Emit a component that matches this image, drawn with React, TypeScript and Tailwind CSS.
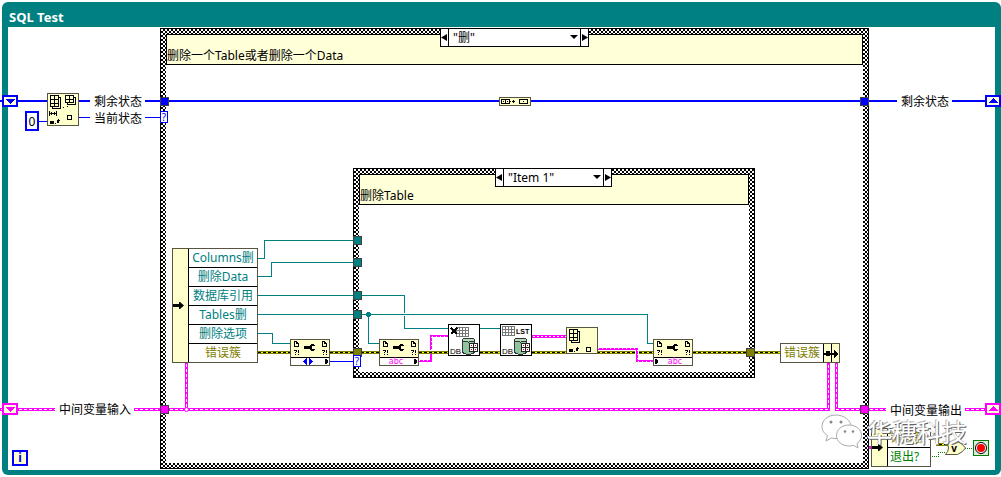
import React, { useState } from 'react';

interface CaseProps {
  className: string;
  note: string;
  options: string[];
  selectorClass: string;
  label: string;
}

// Checkered case structure with its selector on the top edge
function CaseStructure({ className, note, options, selectorClass, label }: CaseProps) {
  const [index, setIndex] = useState(0);
  const step = (delta: number) => setIndex((index + delta + options.length) % options.length);

  return (
    <section className={`absolute border border-black ${className}`}>
      <svg className="absolute h-full w-full" shapeRendering="crispEdges" aria-hidden="true">
        <defs>
          <pattern id={`hatch-${label}`} width="4" height="4" patternUnits="userSpaceOnUse">
            <rect width="4" height="4" fill="#000" />
            <path d="M0 0h2v2H0zM2 2h2v2H2z" fill="#fff" />
          </pattern>
        </defs>
        <rect width="100%" height="100%" fill={`url(#hatch-${label})`} />
      </svg>
      <div className="relative h-full p-[5px]">
        <div className="h-full bg-white">
          <p className="flex h-[31px] items-end border border-black bg-[#ffffd8] leading-4">{note}</p>
        </div>
      </div>
      <div className={`absolute -top-px flex h-[19px] border border-black bg-white ${selectorClass}`}>
        <button aria-label="Previous case" className="w-2 shrink-0 border-r border-black" onClick={() => step(-1)}>
          <svg viewBox="0 0 7 17" className="h-[17px] w-[7px]"><path d="M6 5v7L0 8.5z" /></svg>
        </button>
        <div className="relative flex-1">
          <select
            aria-label={label}
            value={index}
            onChange={(e) => setIndex(Number(e.target.value))}
            className="block h-[17px] w-full appearance-none bg-white pl-1 leading-4 outline-none"
          >
            {options.map((option, i) => (
              <option key={option} value={i}>{option}</option>
            ))}
          </select>
          <svg viewBox="0 0 8 4" className="pointer-events-none absolute top-1.5 right-0.5 h-1 w-2"><path d="M0 0h8L4 4z" /></svg>
        </div>
        <button aria-label="Next case" className="w-2 shrink-0 border-l border-black" onClick={() => step(1)}>
          <svg viewBox="0 0 7 17" className="h-[17px] w-[7px]"><path d="M1 5v7l6-3.5z" /></svg>
        </button>
      </div>
    </section>
  );
}

const TEAL_WIRES = [
  'M258 258.5H264.5V240.5H354',
  'M258 276.5H271.5V262.5H354',
  'M258 295.5H354M361 295.5H404.5V313M404.5 316V328.5H448M480 328.5H500',
  'M258 314.5H354M361 314.5H647.5V343.5H653',
  'M368.5 314V343.5H379',
  'M258 333.5H272.5V343.5H290',
];

const ERROR_WIRES =
  'M258 352.5H290M330 352.5H353M361 352.5H379M419 352.5H448M480 352.5H500M532 352.5H635M639 352.5H653M693 352.5H747M755 352.5H780M931 437.5H937.5V444.5H948';

const CLUSTER_WIRES =
  'M0 409.5H2M18 409.5H55M134 409.5H160M169 409.5H828.5V363M836.5 363V409.5H860M869 409.5H886M965 409.5H985M186.5 363V409';

const TUNNELS = [
  { x: 160, y: 97, fill: '#00f' },
  { x: 860, y: 97, fill: '#00f' },
  { x: 160, y: 405, fill: '#f0f' },
  { x: 860, y: 405, fill: '#f0f' },
  { x: 353, y: 236, fill: '#008080' },
  { x: 353, y: 258, fill: '#008080' },
  { x: 353, y: 291, fill: '#008080' },
  { x: 353, y: 310, fill: '#008080' },
  { x: 353, y: 348, fill: '#808000' },
  { x: 746, y: 348, fill: '#808000' },
];

const SHIFT_REGISTERS = [
  { x: 2, y: 95, color: '#00f', arrow: 'M3 4h10L8 9z' },
  { x: 985, y: 95, color: '#00f', arrow: 'M3 8h10L8 3z' },
  { x: 2, y: 403, color: '#f0f', arrow: 'M3 4h10L8 9z' },
  { x: 985, y: 403, color: '#f0f', arrow: 'M3 8h10L8 3z' },
];

const CASE_TERMINALS = [
  { x: 160, y: 111 },
  { x: 353, y: 355 },
];

// Wires plus the terminals they end on
function Wiring() {
  return (
    <svg width="1001" height="477" viewBox="0 0 1001 477" fill="none" shapeRendering="crispEdges" className="pointer-events-none absolute top-0 left-0" aria-hidden="true">
      <path stroke="#00f" strokeWidth="2" d="M0 101H2M18 101H47M79 101H90M145 101H160M169 101H499M531 101H860M869 101H897M952 101H985" />
      <path stroke="#00f" d="M79 117.5H90M145 117.5H160M39 121.5H47M330 361.5H353" />
      {TEAL_WIRES.map((d) => (
        <path key={d} d={d} stroke="#008080" />
      ))}
      <circle cx="368.5" cy="314.5" r="2.5" fill="#008080" />

      <path d={ERROR_WIRES} stroke="#808000" strokeWidth="3" />
      <path d={ERROR_WIRES} stroke="#ff0" />
      <path d={ERROR_WIRES} stroke="#000" strokeDasharray="3 2" />

      <path d={CLUSTER_WIRES} stroke="#f0f" strokeWidth="3" />
      <path d={CLUSTER_WIRES} stroke="#fff" strokeDasharray="3 2" strokeDashoffset="-1" />
      <circle cx="186.5" cy="409.5" r="2" fill="#fff" stroke="#f0f" shapeRendering="auto" />

      <path stroke="#f0f" strokeWidth="2" d="M419 361H431V354M431 350V336H448M598 349H637V361H653" />
      <path stroke="#fff" strokeDasharray="1 3" d="M419 360.5H431M431.5 337V350M432 336.5H448M598 348.5H637M637.5 350V361M638 361.5H653" />
      <path stroke="#f0f" strokeWidth="3" d="M532 336.5H566" />
      <path stroke="#fff" strokeDasharray="2 2" d="M533 336.5H566" />
      <path stroke="#f0f" strokeWidth="3" d="M869 447.5H871" />
      <path stroke="#008000" strokeDasharray="1 1" d="M932 456.5H938.5V452.5H946M965 448.5H973" />

      {TUNNELS.map(({ x, y, fill }) => (
        <rect key={`${x}-${y}`} x={x + 0.5} y={y + 0.5} width="8" height="8" fill={fill} stroke="#404040" />
      ))}
      {SHIFT_REGISTERS.map(({ x, y, color, arrow }) => (
        <g key={`${x}-${y}`} transform={`translate(${x} ${y})`}>
          <rect x="1" y="1" width="14" height="10" fill="#ffffd8" stroke={color} strokeWidth="2" />
          <path d={arrow} fill={color} />
        </g>
      ))}
      {CASE_TERMINALS.map(({ x, y }) => (
        <g key={`${x}-${y}`} transform={`translate(${x} ${y})`}>
          <rect x=".5" y=".5" width="7" height="11" fill="#fff" stroke="#00f" />
          <text x="4" y="10" textAnchor="middle" fontSize="10" fill="#00f">?</text>
        </g>
      ))}
    </svg>
  );
}

// 3x4 grid with a second page peeking out behind it
function ArrayGlyph() {
  return (
    <g fill="none" stroke="#000">
      <path d="M3.5 2.5h8v11h-8zM7.5 2.5v11M3.5 6.5h8M3.5 10.5h8" />
      <path d="M11.5 4.5h2v11h-8v-2" />
    </g>
  );
}

function ArraySubset() {
  return (
    <svg viewBox="0 0 32 33" className="absolute top-[93px] left-[47px] h-[33px] w-8" shapeRendering="crispEdges">
      <rect x=".5" y=".5" width="31" height="32" fill="#ffffcc" stroke="#555541" />
      <ArrayGlyph />
      <path d="M18.5 2.5h8v7h-8zM22.5 2.5v7M18.5 6.5h8M26.5 4.5h2v7h-8v-2" fill="none" stroke="#000" />
      <path d="M16 14h1v1h-1zM20 13h1v1h-1zM2 18h1v5H2zM9 18h1v5H9zM3 20h6v1H3zM4 19h1v3H4zM7 19h1v3H7z" />
      <path d="M3 28h4v3H3zM8 30h1v1H8zM10 28h1v2h-1zM11 26h1v4h-1zM10 27h3v1h-3z" />
      <path d="M20.5 22.5h4v4h-4z" fill="none" stroke="#000" />
    </svg>
  );
}

function IndexArray() {
  return (
    <svg viewBox="0 0 32 27" className="absolute top-[327px] left-[566px] h-[27px] w-8" shapeRendering="crispEdges">
      <rect x=".5" y=".5" width="31" height="26" fill="#ffffcc" stroke="#555541" />
      <ArrayGlyph />
      <path d="M3 22h4v3H3zM8 24h1v1H8zM10 22h1v2h-1zM11 20h1v4h-1zM10 21h3v1h-3z" />
      <path d="M20.5 20.5h4v4h-4z" fill="none" stroke="#000" />
    </svg>
  );
}

function BuildArray() {
  return (
    <svg viewBox="0 0 32 9" className="absolute top-[97px] left-[499px] h-[9px] w-8" shapeRendering="crispEdges">
      <rect x=".5" y=".5" width="31" height="8" fill="#ffffcc" stroke="#555541" />
      <path d="M2.5 2.5h8v4h-8zM6.5 2.5v4M20.5 2.5h8v4h-8z" fill="none" stroke="#000" />
      <path d="M4 4h1v1H4zM8 4h1v1H8zM13 4h3v1h-3zM14 3h1v3h-1zM24 4h1v1h-1zM11 4h1v1h-1z" />
    </svg>
  );
}

function PropertyNode({ className, mode }: { className: string; mode: 'ref' | 'read' | 'write' }) {
  return (
    <svg viewBox="0 0 40 27" className={`absolute h-[27px] w-10 ${className}`} shapeRendering="crispEdges">
      <rect x=".5" y=".5" width="39" height="26" fill="#ffffcc" stroke="#555541" />
      <path d="M1 19h38v7H1z" fill="#fff" />
      <path d="M1 18h38v1H1z" />
      {[0, 28].map((x) => (
        <g key={x} transform={`translate(${x} 0)`}>
          <path d="M4.5 2.5h2l2 2v3h-4zM6.5 2.5v2h2" fill="none" stroke="#000" />
          <path d="M4 11h2v1H4zM6 11h1v2H6zM5 13h1v1H5zM5 15h1v1H5zM8 11h1v3H8zM8 15h1v1H8z" />
        </g>
      ))}
      <path d="M14 7h7v3h-7zM20 6h2v5h-2zM21 5h3v2h-3zM21 10h3v2h-3zM24 6h1v1h-1zM24 10h1v1h-1z" />
      {mode === 'ref' && <path d="M13 22.5l4-3.5v7zM23 22.5l-4-3.5v7z" fill="#00f" />}
      {mode === 'write' ? <path d="M2 20h1l2 2v1l-2 2H2z" /> : <path d="M35 20h1l2 2v1l-2 2h-1z" />}
      {mode !== 'ref' && (
        <text x={mode === 'read' ? 17 : 22} y="25" textAnchor="middle" fontSize="8" fill="#f0f" fontFamily="DejaVu Sans">abc</text>
      )}
    </svg>
  );
}

function DbNode({ className, list = false }: { className: string; list?: boolean }) {
  return (
    <svg viewBox="0 0 32 32" className={`absolute h-8 w-8 ${className}`} shapeRendering="crispEdges" fontFamily="Liberation Sans">
      <rect x=".5" y=".5" width="31" height="31" fill="#fff" stroke="#000" />
      <path
        transform={list ? 'translate(2 2)' : 'translate(8 3)'}
        d="M.5.5h12v9H.5zM3.5.5v9M6.5.5v9M9.5.5v9M.5 3.5h12M.5 6.5h12"
        fill="none"
        stroke="#777"
      />
      {list ? (
        <text x="16" y="10" fontSize="7" fontWeight="700">LST</text>
      ) : (
        <path d="M3 4l6 6M9 4l-6 6" stroke="#000" strokeWidth="2" />
      )}
      <path d="M14.5 16v12c2 3 10 3 12 0V16z" fill="#8fc49f" stroke="#333" />
      <ellipse cx="20.5" cy="16" rx="6" ry="2" fill="#b4dcbc" stroke="#333" />
      <path d="M21.5 19.5h8v8h-8zM25.5 19.5v8M21.5 23.5h8" fill="#fff" stroke="#222" />
      <path d="M23 21h1v1h-1zM27 25h1v1h-1zM23 25h1v1h-1zM27 21h1v1h-1z" fill="#c00" />
      <text x="2" y="30" fontSize="8">DB</text>
    </svg>
  );
}

function ArrowRight() {
  return (
    <svg viewBox="0 0 11 7" className="h-[7px] w-[11px]">
      <path d="M0 2h6V0h1l4 3.5L7 7H6V5H0z" />
    </svg>
  );
}

interface Field {
  name: string;
  color: string;
}

const FIELDS: Field[] = [
  { name: 'Columns删', color: 'text-[#008080]' },
  { name: '删除Data', color: 'text-[#008080]' },
  { name: '数据库引用', color: 'text-[#008080]' },
  { name: 'Tables删', color: 'text-[#008080]' },
  { name: '删除选项', color: 'text-[#008080]' },
  { name: '错误簇', color: 'text-[#808000]' },
];

const EXIT_FIELDS: Field[] = [
  { name: '错误簇', color: 'text-[#808000]' },
  { name: '退出?', color: 'text-[#008000]' },
];

function Unbundle({ className, listClass, fields }: { className: string; listClass: string; fields: Field[] }) {
  return (
    <div className={`absolute flex border border-[#555541] bg-white ${className}`}>
      <div className="flex w-4 shrink-0 items-center border-r border-black bg-[#ffffcc]">
        <ArrowRight />
      </div>
      <ul className="flex-1 divide-y divide-black">
        {fields.map((field) => (
          <li key={field.name} className={`h-[19px] leading-[18px] whitespace-nowrap last:h-[18px] ${listClass} ${field.color}`}>{field.name}</li>
        ))}
      </ul>
    </div>
  );
}

function Bundle() {
  return (
    <div className="absolute top-[343px] left-[780px] flex h-5 w-[60px] border border-[#555541] bg-white">
      <span className="flex-1 text-center leading-[18px] text-[#808000]">错误簇</span>
      <svg viewBox="0 0 16 18" className="w-4" shapeRendering="crispEdges">
        <path d="M0 0h16v18H0z" fill="#ffffcc" />
        <path d="M0 0h1v18H0zM8 0h1v18H8zM1 9h3v2H1zM3 7h4v5H3zM7 9h5v2H7zM11 6h1l3 4-3 4h-1z" />
      </svg>
    </div>
  );
}

function WireLabel({ className, children }: { className: string; children: React.ReactNode }) {
  return <span className={`absolute leading-4 whitespace-nowrap ${className}`}>{children}</span>;
}

function Watermark() {
  return (
    <div className="pointer-events-none absolute top-[413px] left-[821px] flex items-center gap-1">
      <svg viewBox="0 0 42 36" className="h-9 w-[42px]" fill="#fff" stroke="#aaa" strokeWidth="1">
        <path d="M15 2C7 2 1 7 1 13.5c0 4 2 7 5.5 9L5 28l5.5-3c2 .5 5 .8 7 .5 8 0 12.500-6 12.500-12S23 2 15 2z" />
        <path d="M28 12c-7 0-12.500 4.500-12.500 10.500S21 33 28 33c1.500 0 3-.2 4.500-.7L37 35l-1-4.500c3-2 4.500-5 4.500-8C40.500 16.500 35 12 28 12z" />
        <g fill="#888" stroke="none">
          <circle cx="10" cy="9" r="1.5" />
          <circle cx="20" cy="9" r="1.5" />
          <circle cx="24" cy="18.5" r="1.3" />
          <circle cx="32" cy="18.5" r="1.3" />
        </g>
      </svg>
      <span className="font-['Noto_Sans_CJK_SC',sans-serif] text-[25px] leading-9 whitespace-nowrap text-white [text-shadow:1px_1px_0_#666,-1px_-1px_0_#bbb]">华穗科技</span>
    </div>
  );
}

export default function App() {
  return (
    <main className="relative flex min-h-screen flex-col overflow-hidden bg-white pt-0.5 pb-0.5 pl-0.5 font-['Noto_Sans','Noto_Sans_CJK_SC',sans-serif] text-[12px] text-black">
      <section className="flex flex-1 flex-col rounded-md bg-[#008080] px-1.5 pb-[5px]">
        <h1 className="h-[25px] pl-px text-[13px] leading-[31px] font-bold text-white">SQL Test</h1>
        <div className="flex-1 bg-white" />
      </section>

      <CaseStructure
        className="top-7 left-40 h-[441px] w-[709px]"
        note="删除一个Table或者删除一个Data"
        options={['"删"']}
        selectorClass="left-[279px] w-[149px]"
        label="state"
      />
      <CaseStructure
        className="top-[168px] left-[353px] h-[210px] w-[402px]"
        note="删除Table"
        options={['"Item 1"']}
        selectorClass="left-[141px] w-[117px]"
        label="item"
      />
      <Wiring />

      <div className="absolute top-[94px] left-[94px] flex flex-col gap-px leading-4 whitespace-nowrap">
        <span>剩余状态</span>
        <span>当前状态</span>
      </div>
      <WireLabel className="top-[94px] left-[901px]">剩余状态</WireLabel>
      <WireLabel className="top-[402px] left-[59px]">中间变量输入</WireLabel>
      <WireLabel className="top-[403px] left-[890px]">中间变量输出</WireLabel>

      <ArraySubset />
      <input
        aria-label="Index constant"
        defaultValue="0"
        className="absolute top-[111px] left-[25px] h-5 w-3.5 border-2 border-[#00f] bg-white text-center leading-4 outline-none"
      />
      <BuildArray />
      <Unbundle className="top-[248px] left-[172px] w-[86px]" listClass="text-center" fields={FIELDS} />
      <PropertyNode className="top-[339px] left-[290px]" mode="ref" />
      <PropertyNode className="top-[339px] left-[379px]" mode="read" />
      <PropertyNode className="top-[339px] left-[653px]" mode="write" />
      <DbNode className="top-[324px] left-[448px]" />
      <DbNode className="top-[324px] left-[500px]" list />
      <IndexArray />
      <Bundle />
      <Unbundle className="top-[428px] left-[871px] w-[60px]" listClass="pl-0.5" fields={EXIT_FIELDS} />

      <span className="absolute top-[450px] left-3 flex h-4 w-4 items-center justify-center border-2 border-[#00f] bg-[#ffffcc] font-bold text-[#00f]">i</span>

      <div className="absolute top-[440px] left-[945px] flex items-center gap-[7px]">
        <svg viewBox="0 0 21 14" className="h-3.5 w-[21px]">
          <path d="M.5.5h12q5 2 8 6.5-3 4.500-8 6.500H.5q6-6.500 0-13z" fill="#ffffcc" stroke="#555541" />
          <text x="9" y="11" textAnchor="middle" fontSize="10" fontWeight="700">v</text>
        </svg>
        <button aria-label="Stop" className="flex h-4 w-4 items-center justify-center border border-[#008000] bg-[#d8ecd8]">
          <svg viewBox="0 0 12 12" className="h-3 w-3">
            <circle cx="6" cy="6" r="5.5" fill="#fff" stroke="#000" />
            <circle cx="6" cy="6" r="4" fill="#f00" />
          </svg>
        </button>
      </div>

      <Watermark />
    </main>
  );
}
